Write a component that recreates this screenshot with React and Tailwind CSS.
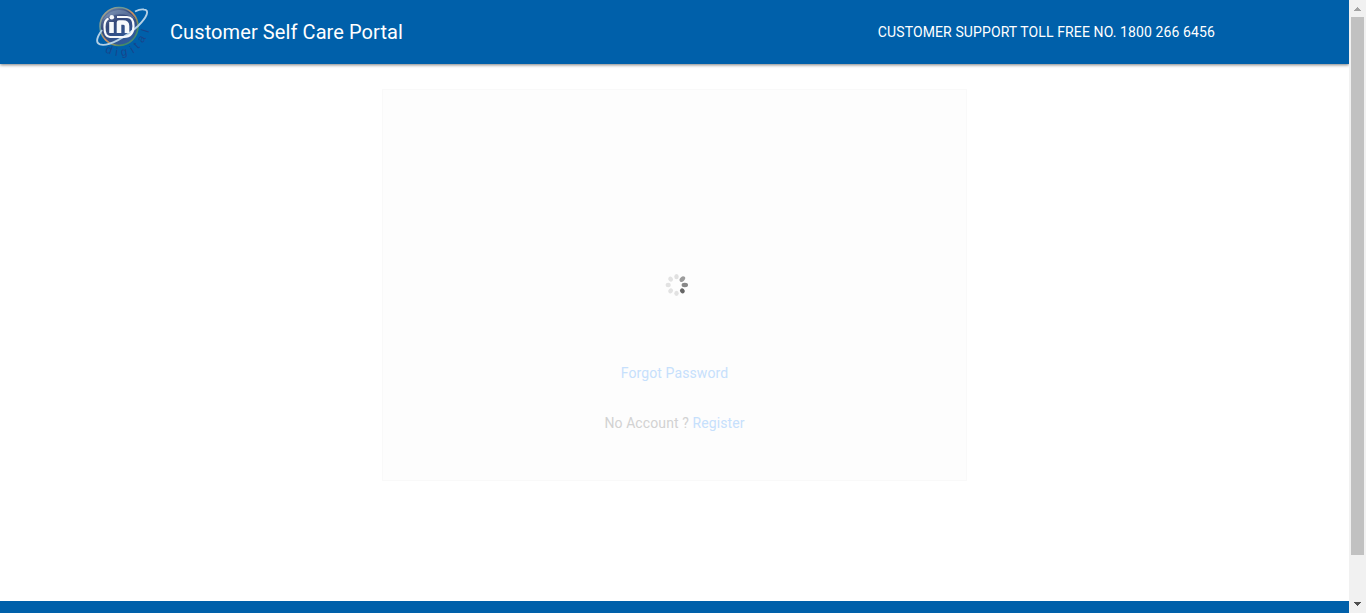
import React from "react";

function Logo() {
  return (
    <svg className="mr-[-4px] block h-16 w-16 shrink-0 overflow-visible" viewBox="0 0 64 64" aria-label="in digital">
      <defs>
        <linearGradient id="rim" x1="0" y1="0" x2="1" y2="1">
          <stop offset="0" stopColor="#d5a080" />
          <stop offset="0.3" stopColor="#5f9a9a" />
          <stop offset="0.5" stopColor="#d5905f" />
          <stop offset="0.8" stopColor="#3f8b62" />
          <stop offset="1" stopColor="#5b78a0" />
        </linearGradient>
        <linearGradient id="globe" x1="0" y1="0" x2="0.6" y2="1">
          <stop offset="0" stopColor="#7f98ba" />
          <stop offset="0.45" stopColor="#36497a" />
          <stop offset="1" stopColor="#2f5b9c" />
        </linearGradient>
      </defs>
      <circle cx="29" cy="26.5" r="19" fill="url(#globe)" stroke="url(#rim)" strokeWidth="1.6" />
      <path d="M13 20 C19 8 37 6 45 19 C35 12 22 13 13 20Z" fill="#9bb4d0" opacity="0.35" />
      <path d="M12 30 C7 37 5 42.5 10 44.4 C18 47 36 37 48 26 C57 17 60 10 54 9.5 C51 9 48 10 45 11.5" fill="none" stroke="#b3d0e6" strokeWidth="1.9" />
      <g fill="none" stroke="#f7f9fc" strokeLinejoin="round">
        <path d="M18.5 18.5 Q14.5 20 14.5 27 Q14.5 37 20 37 L34 37 Q43.5 36.5 43.5 26 Q43.5 17 37 17 L27 17" strokeWidth="2.2" />
        <path d="M21.5 22 V33" strokeWidth="4.6" />
        <path d="M29 33 V22.5 H33 Q37 22.5 37 26 V33" strokeWidth="4.6" />
      </g>
      <circle cx="21.8" cy="17.2" r="2.3" fill="#f7f9fc" />
      <g fill="#17458c" fontSize="11.5" textAnchor="middle" className="font-['Liberation_Sans',sans-serif]">
        <text transform="translate(19 50) rotate(20)" y="3.5">d</text>
        <text transform="translate(26.5 52.5) rotate(8)" y="3.5">i</text>
        <text transform="translate(34 53) rotate(-8)" y="2.5">g</text>
        <text transform="translate(42 50) rotate(-30)" y="3.5">i</text>
        <text transform="translate(46.5 45.5) rotate(-42)" y="3.5">t</text>
        <text transform="translate(51.5 39) rotate(-58)" y="3.5">a</text>
        <text transform="translate(55.5 31) rotate(-72)" y="3.5">l</text>
      </g>
    </svg>
  );
}

const spokes = [
  { angle: 0, color: "#e0e0e0" },
  { angle: 45, color: "#9c9c9c" },
  { angle: 90, color: "#888888" },
  { angle: 135, color: "#666666" },
  { angle: 180, color: "#e2e2e2" },
  { angle: 225, color: "#e2e2e2" },
  { angle: 270, color: "#e2e2e2" },
  { angle: 315, color: "#e2e2e2" },
];

function Spinner() {
  return (
    <svg className="h-6 w-6" viewBox="-11.5 -12 24 24" aria-label="Loading">
      {spokes.map(({ angle, color }) => (
        <ellipse
          key={angle}
          cx="0"
          cy="-8.3"
          rx="2.2"
          ry={angle === 45 || angle === 90 ? 3.2 : 2.6}
          fill={color}
          transform={`rotate(${angle})`}
        />
      ))}
    </svg>
  );
}

function Scrollbar() {
  return (
    <div className="flex w-[17px] shrink-0 flex-col items-center bg-[#f1f1f1]">
      <div className="flex h-[17px] w-full items-center justify-center">
        <svg className="h-1 w-[7px]" viewBox="0 0 7 4" shapeRendering="crispEdges">
          <path d="M3 0h1v1h1v1h1v1h1v1H0V3h1V2h1V1h1z" fill="#a3a3a3" />
        </svg>
      </div>
      <div className="h-[538px] w-[13px] bg-[#c1c1c1]" />
      <div className="mt-auto flex h-[18px] w-full items-center justify-center">
        <svg className="h-1 w-[7px]" viewBox="0 0 7 4" shapeRendering="crispEdges">
          <path d="M0 0h7v1H6v1H5v1H4v1H3V3H2V2H1V1H0z" fill="#505050" />
        </svg>
      </div>
    </div>
  );
}

export default function App() {
  return (
    <div className="flex h-[613px] w-[1366px] overflow-hidden bg-white font-['Roboto',sans-serif]">
      <div className="flex min-w-0 flex-1 flex-col">
        <header className="flex h-16 shrink-0 items-center bg-[#0060aa] pr-[134px] pl-[90px] text-white shadow-[0_1px_3px_rgba(0,0,0,0.5)]">
          <Logo />
          <h1 className="ml-5 text-[20px] leading-6 tracking-[0.09px] whitespace-nowrap">Customer Self Care Portal</h1>
          <p className="ml-auto text-[14px] leading-5 tracking-[0.11px] whitespace-nowrap">
            CUSTOMER SUPPORT TOLL FREE NO. 1800 266 6456
          </p>
        </header>
        <main className="flex flex-1 justify-center pt-[25px]">
          <section className="relative mr-px flex h-[392px] w-[585px] flex-col items-center border border-[#f9f9f9] bg-[#fdfdfd] pt-[273px] text-[14px] leading-5">
            <div className="absolute top-[183px] left-[282px]">
              <Spinner />
            </div>
            <a className="pl-px tracking-[0.1px] text-[#c6e0fc]">Forgot Password</a>
            <p className="mt-[30px] pl-px tracking-[0.1px] text-[#d2d2d2]">
              No Account ? <a className="text-[#c6e0fc]">Register</a>
            </p>
          </section>
        </main>
        <footer className="h-3 shrink-0 bg-[#0060aa]" />
      </div>
      <Scrollbar />
    </div>
  );
}
